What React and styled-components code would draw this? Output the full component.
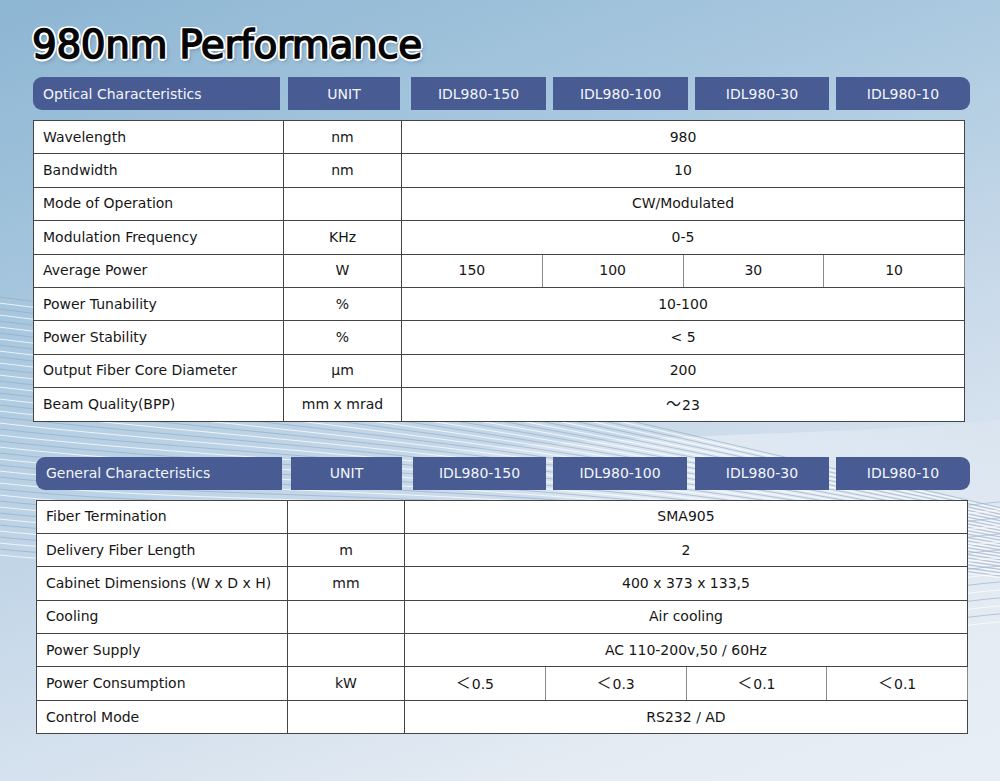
import React from 'react';
import styled, { createGlobalStyle } from 'styled-components';

const GlobalStyle = createGlobalStyle`
    html, body {
        margin: 0;
        padding: 0;
    }
    body {
        font-family: "DejaVu Sans", "Liberation Sans", sans-serif;
    }
`;

const Page = styled.div`
    position: relative;
    width: 1000px;
    height: 781px;
    overflow: hidden;
    background: linear-gradient(160deg, #8db6d3 0%, #a9c8df 30%, #cddceb 60%, #e4ebf3 85%, #e8eef5 100%);
`;

const Waves = styled.svg`
    position: absolute;
    left: 0;
    top: 0;
    width: 1000px;
    height: 781px;
    pointer-events: none;
`;

const Content = styled.div`
    position: relative;
    display: flex;
    flex-direction: column;
    padding-top: 22px;
`;

const Title = styled.h1`
    margin: 0 0 0 32px;
    height: 55px;
    font-family: "DejaVu Sans", "Liberation Sans", sans-serif;
    font-weight: normal;
    font-size: 39px;
    line-height: 46px;
    letter-spacing: -0.4px;
    color: #050505;
    -webkit-text-stroke: 1.5px #050505;
    text-shadow:
        2.5px 0 0 #fff, -2.5px 0 0 #fff, 0 2.5px 0 #fff, 0 -2.5px 0 #fff,
        1.8px 1.8px 0 #fff, -1.8px 1.8px 0 #fff, 1.8px -1.8px 0 #fff, -1.8px -1.8px 0 #fff,
        2px 3px 4px rgba(40, 60, 90, 0.45);
`;

const Section = styled.section`
    display: flex;
    flex-direction: column;
    margin-left: ${p => p.$left}px;
    margin-top: ${p => p.$top}px;
`;

const HeaderBar = styled.div`
    display: grid;
    grid-template-columns: ${p => p.$cols};
    height: 33px;
`;

const HeaderCell = styled.div`
    display: flex;
    align-items: center;
    justify-content: ${p => (p.$left ? 'flex-start' : 'center')};
    padding-left: ${p => (p.$left ? '10px' : '0')};
    background: #485b93;
    color: #f4f6fb;
    font-size: 14px;
    border-radius: ${p => p.$radius || '0'};
`;

const Table = styled.table`
    margin-top: 10px;
    border-collapse: collapse;
    background: #fff;
    table-layout: fixed;
    width: 932px;
    border: 1px solid #3c3c3c;
`;

const Row = styled.tr`
    height: 33.4px;
`;

const Cell = styled.td`
    padding: 0;
    padding-left: ${p => (p.$label ? '9px' : '0')};
    text-align: ${p => (p.$label ? 'left' : 'center')};
    font-size: 14px;
    line-height: 17px;
    color: #161616;
    border-top: 1px solid #444;
    border-bottom: 1px solid #444;
    border-left: 1px solid ${p => (p.$sub ? '#8a8a8a' : '#444')};
    border-right: 1px solid ${p => (p.$sub ? '#8a8a8a' : '#444')};
`;

const Wide = styled.span`
    font-family: "Noto Sans CJK SC", "DejaVu Sans", sans-serif;
    font-size: 15px;
    line-height: 1;
    vertical-align: 1px;
    margin-right: 1px;
`;

const models = ['IDL980-150', 'IDL980-100', 'IDL980-30', 'IDL980-10'];

const optical = [
    ['Wavelength', 'nm', '980'],
    ['Bandwidth', 'nm', '10'],
    ['Mode of Operation', '', 'CW/Modulated'],
    ['Modulation Frequency', 'KHz', '0-5'],
    ['Average Power', 'W', ['150', '100', '30', '10']],
    ['Power Tunability', '%', '10-100'],
    ['Power Stability', '%', '< 5'],
    ['Output Fiber Core Diameter', 'μm', '200'],
    ['Beam Quality(BPP)', 'mm x mrad', <><Wide>～</Wide>23</>],
];

const general = [
    ['Fiber Termination', '', 'SMA905'],
    ['Delivery Fiber Length', 'm', '2'],
    ['Cabinet Dimensions (W x D x H)', 'mm', '400 x 373 x 133,5'],
    ['Cooling', '', 'Air cooling'],
    ['Power Supply', '', 'AC 110-200v,50 / 60Hz'],
    ['Power Consumption', 'kW', ['0.5', '0.3', '0.1', '0.1'].map(v => <><Wide>＜</Wide>{v}</>)],
    ['Control Mode', '', 'RS232 / AD'],
];

// background stripes, drawn only as decoration behind the tables
const WaveLines = () => {
    const lines = [];
    for (let i = 0; i < 44; i++) {
        const y0 = 296 + i * 6;
        const y1 = 405 + i * 2.6;
        const y2 = 480 + i * 1.6;
        lines.push(
            <path
                key={'a' + i}
                d={`M -10 ${y0} C 250 ${y0 + 30}, 560 ${y1}, 1010 ${y2 + 30}`}
                stroke={i % 2 ? '#ffffff' : '#8fa9c2'}
                strokeOpacity={i % 2 ? 0.75 : 0.6}
                strokeWidth="1"
                fill="none"
            />
        );
    }
    for (let i = 0; i < 16; i++) {
        const y = 505 + i * 8;
        lines.push(
            <path
                key={'b' + i}
                d={`M 900 ${y + 10} Q 960 ${y} 1010 ${y - 4}`}
                stroke={i % 2 ? '#ffffff' : '#9fb5ca'}
                strokeOpacity="0.7"
                strokeWidth="1"
                fill="none"
            />
        );
    }
    return (
        <Waves viewBox="0 0 1000 781">
            <defs>
                <linearGradient id="glow" x1="0" y1="0" x2="1" y2="0">
                    <stop offset="0" stopColor="#ffffff" stopOpacity="0" />
                    <stop offset="0.6" stopColor="#ffffff" stopOpacity="0.35" />
                    <stop offset="1" stopColor="#ffffff" stopOpacity="0.1" />
                </linearGradient>
            </defs>
            <path d="M 300 470 C 550 430, 800 440, 1000 420 L 1000 560 C 800 520, 600 500, 300 470 Z" fill="url(#glow)" />
            {lines}
        </Waves>
    );
};

const SpecTable = ({ title, rows, left, top, headerCols, firstCols }) => (
    <Section $left={left} $top={top}>
        <HeaderBar $cols={headerCols}>
            <HeaderCell $left $radius="9px 0 0 9px">{title}</HeaderCell>
            <span />
            <HeaderCell>UNIT</HeaderCell>
            <span />
            {models.map((m, i) => (
                <React.Fragment key={m}>
                    <HeaderCell $radius={i === 3 ? '0 9px 9px 0' : '0'}>{m}</HeaderCell>
                    {i < 3 && <span />}
                </React.Fragment>
            ))}
        </HeaderBar>
        <Table>
            <colgroup>
                <col style={{ width: firstCols[0] }} />
                <col style={{ width: firstCols[1] }} />
                <col />
                <col />
                <col />
                <col />
            </colgroup>
            <tbody>
                {rows.map(([name, unit, value]) => (
                    <Row key={name}>
                        <Cell $label>{name}</Cell>
                        <Cell>{unit}</Cell>
                        {Array.isArray(value)
                            ? value.map((v, i) => <Cell key={i} $sub>{v}</Cell>)
                            : <Cell colSpan={4}>{value}</Cell>}
                    </Row>
                ))}
            </tbody>
        </Table>
    </Section>
);

const App = () => (
    <>
        <GlobalStyle />
        <Page>
            <WaveLines />
            <Content>
                <Title>980nm Performance</Title>
                <SpecTable
                    title="Optical Characteristics"
                    rows={optical}
                    left={33}
                    top={0}
                    headerCols="247px 8px 112px 11px 135px 7px 135px 7px 134px 7px 134px"
                    firstCols={['250px', '118px']}
                />
                <SpecTable
                    title="General Characteristics"
                    rows={general}
                    left={36}
                    top={35}
                    headerCols="246px 9px 111px 11px 133px 7px 134px 8px 134px 7px 134px"
                    firstCols={['251px', '117px']}
                />
            </Content>
        </Page>
    </>
);

export default App;
